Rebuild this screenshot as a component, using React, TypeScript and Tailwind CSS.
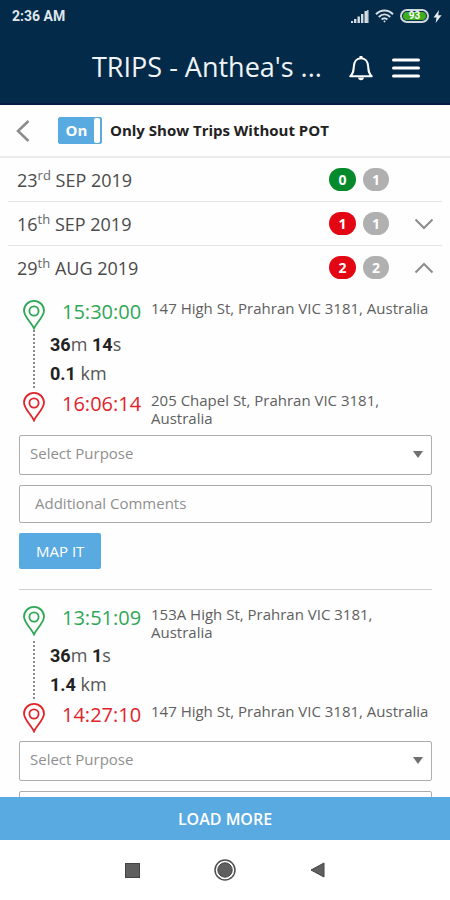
import React, { useState } from 'react';

interface Stop {
  time: string;
  address: string;
}

interface Trip {
  id: number;
  start: Stop;
  end: Stop;
  minutes: number;
  seconds: number;
  km: string;
}

interface TripDay {
  id: string;
  day: number;
  suffix: string;
  label: string;
  missing: number;
  total: number;
  trips: Trip[];
}

const DAYS: TripDay[] = [
  { id: 'sep-23', day: 23, suffix: 'rd', label: 'SEP 2019', missing: 0, total: 1, trips: [] },
  { id: 'sep-16', day: 16, suffix: 'th', label: 'SEP 2019', missing: 1, total: 1, trips: [] },
  {
    id: 'aug-29',
    day: 29,
    suffix: 'th',
    label: 'AUG 2019',
    missing: 2,
    total: 2,
    trips: [
      {
        id: 1,
        start: { time: '15:30:00', address: '147 High St, Prahran VIC 3181, Australia' },
        end: { time: '16:06:14', address: '205 Chapel St, Prahran VIC 3181, Australia' },
        minutes: 36,
        seconds: 14,
        km: '0.1',
      },
      {
        id: 2,
        start: { time: '13:51:09', address: '153A High St, Prahran VIC 3181, Australia' },
        end: { time: '14:27:10', address: '147 High St, Prahran VIC 3181, Australia' },
        minutes: 36,
        seconds: 1,
        km: '1.4',
      },
    ],
  },
];

const StatusBar: React.FC = () => (
  <div className="flex h-8 items-center justify-between pl-3 pr-2 font-['Roboto',sans-serif] text-[14px] font-bold text-[#dfe6ec]">
    <span>2:36 AM</span>
    <div className="flex items-center gap-1.5">
      <svg width="18" height="13" viewBox="0 0 18 13" fill="#d5dde4" aria-hidden="true">
        <rect x="0" y="11" width="2" height="2" />
        <rect x="3" y="9" width="2.4" height="4" />
        <rect x="6.5" y="6.5" width="2.4" height="6.5" />
        <rect x="10" y="4" width="2.4" height="9" />
        <rect x="13.5" y="1" width="2.6" height="12" />
        <rect x="16.1" y="0" width="1.4" height="13" />
      </svg>
      <svg width="19" height="14" viewBox="0 0 19 14" fill="none" stroke="#d5dde4" strokeWidth="2" aria-hidden="true">
        <path d="M1 5.2C6 .2 13 .2 18 5.2" />
        <path d="M3.8 8C7.2 4.8 11.8 4.8 15.2 8" />
        <path d="M6.6 10.6C8.4 9 10.6 9 12.4 10.6" />
        <path d="M9.5 11.2l1.2 1.2-1.2 1.2-1.2-1.2z" fill="#d5dde4" stroke="none" />
      </svg>
      <div className="flex items-center gap-1">
        <span className="flex h-[14px] w-[29px] rounded-full border-2 border-[#cfd8dc] p-px">
          <span className="flex flex-1 items-center justify-center rounded-full bg-[#3fae1c] text-[10px] leading-none text-white">93</span>
        </span>
        <svg width="9" height="13" viewBox="0 0 9 13" fill="#e6ecf0" aria-hidden="true">
          <path d="M6 0L.5 7.4h3L2.6 13 8.6 5.2H5.2z" />
        </svg>
      </div>
    </div>
  </div>
);

const Pin: React.FC<{ className: string }> = ({ className }) => (
  <svg width="22" height="30" viewBox="0 0 22 30" fill="none" stroke="currentColor" strokeWidth="1.8" className={className} aria-hidden="true">
    <path d="M11 28.500C8.600 22.600 1 17 1 10.600a10 9.700 0 0 1 20 0C21 17 13.400 22.600 11 28.500z" />
    <circle cx="11" cy="11" r="4.6" />
  </svg>
);

const StopRow: React.FC<{ stop: Stop; color: string }> = ({ stop, color }) => (
  <div className="flex min-h-[31px] items-start">
    <Pin className={`ml-1 mt-px shrink-0 ${color}`} />
    <span className={`ml-[17px] w-[89px] shrink-0 text-xl leading-[25px] ${color}`}>{stop.time}</span>
    <span className="flex-1 text-[15px] leading-[18px] text-[#606060]">{stop.address}</span>
  </div>
);

const TripCard: React.FC<{ trip: Trip }> = ({ trip }) => (
  <article>
    <StopRow stop={trip.start} color="text-[#2fa756]" />
    <div className="mb-[3px] flex">
      <span className="ml-[14px] border-l-2 border-dotted border-[#8a8a8a]" />
      <div className="ml-[15px] text-lg leading-[29px] text-[#555]">
        <p>
          <b className="font-['Roboto',sans-serif] text-[#222]">{trip.minutes}</b>m{' '}
          <b className="font-['Roboto',sans-serif] text-[#222]">{trip.seconds}</b>s
        </p>
        <p>
          <b className="font-['Roboto',sans-serif] text-[#222]">{trip.km}</b> km
        </p>
      </div>
    </div>
    <StopRow stop={trip.end} color="text-[#e0242b]" />
    <div className="relative mt-2">
      <select
        aria-label="Purpose"
        defaultValue=""
        className="block h-10 w-full appearance-none rounded-xs border border-[#adadad] bg-white px-2.5 pb-1 text-[15px] text-[#8f8f8f]"
      >
        <option value="">Select Purpose</option>
        <option value="business">Business</option>
        <option value="private">Private</option>
      </select>
      <svg width="10" height="7" viewBox="0 0 10 7" fill="#707070" className="pointer-events-none absolute right-[9px] top-4" aria-hidden="true">
        <path d="M0 0h10L5 7z" />
      </svg>
    </div>
    <input
      type="text"
      aria-label="Additional Comments"
      placeholder="Additional Comments"
      className="mt-2.5 block h-[38px] w-full rounded-xs border border-[#adadad] px-[15px] pb-0.5 text-[15px] placeholder:text-[#8f8f8f]"
    />
    <button type="button" className="mt-2.5 block h-9 rounded-xs bg-[#5aaae2] px-[17px] text-[15px] text-white">
      MAP IT
    </button>
  </article>
);

const DayRow: React.FC<{ day: TripDay; open: boolean; onToggle: () => void }> = ({ day, open, onToggle }) => (
  <button type="button" onClick={onToggle} className="flex h-[43px] w-full items-center pl-[9px] pr-2 text-left text-lg text-[#4a4a4a]">
    <span className="flex-1">
      {day.day}
      <sup className="text-[13px] text-[#666]">{day.suffix}</sup> {day.label}
    </span>
    <span
      className={`flex h-[23px] w-[27px] items-center justify-center rounded-full text-[14px] font-bold text-white ${
        day.missing === 0 ? 'bg-[#078a2b]' : 'bg-[#e30613]'
      }`}
    >
      {day.missing}
    </span>
    <span className="ml-[7px] flex h-[23px] w-[26px] items-center justify-center rounded-full bg-[#b0b0b0] text-[14px] font-bold text-white">
      {day.total}
    </span>
    <span className="ml-[25px] w-[20px]">
      {day.missing > 0 && (
        <svg width="20" height="12" viewBox="0 0 20 12" fill="none" stroke="#8c8c8c" strokeWidth="2" aria-hidden="true">
          <path d={open ? 'M1.5 10.5L10 2l8.5 8.5' : 'M1.5 1.5L10 10l8.5-8.5'} />
        </svg>
      )}
    </span>
  </button>
);

export default function App() {
  const [openDay, setOpenDay] = useState('aug-29');
  const [withoutPot, setWithoutPot] = useState(true);

  return (
    <div className="flex h-screen flex-col bg-[#fefefe] font-['Open_Sans','Noto_Sans',sans-serif]">
      <header className="shrink-0 border-b-2 border-[#001a44] bg-[#032b49] text-white">
        <StatusBar />
        <div className="flex h-[71px] items-center pl-[92px] pr-[30px]">
          <h1 className="min-w-0 flex-1 whitespace-nowrap text-[27px] text-[#f1f4f6]">TRIPS - Anthea's ...</h1>
          <button type="button" aria-label="Notifications" className="mr-[18px]">
            <svg width="26" height="26" viewBox="0 0 26 26" fill="none" stroke="white" strokeWidth="2" strokeLinejoin="round" aria-hidden="true">
              <path d="M2.2 21.2C5.4 18.6 5.6 16 5.8 11.6 6 6.8 8.6 3.2 13 3.2s7 3.600 7.200 8.400c.2 4.400.4 7 3.600 9.600z" />
              <path d="M10 22.500h6c0 1.600-1.300 2.700-3 2.700s-3-1.100-3-2.700z" fill="white" stroke="none" />
              <path d="M13 1v2" strokeWidth="3" />
            </svg>
          </button>
          <button type="button" aria-label="Menu">
            <svg width="28" height="20" viewBox="0 0 28 20" stroke="white" strokeWidth="3" strokeLinecap="round" aria-hidden="true">
              <path d="M1.500 2h25M1.500 10h25M1.500 18h25" />
            </svg>
          </button>
        </div>
      </header>

      <div className="flex h-[53px] shrink-0 items-center border-b-2 border-[#ececec] pl-4">
        <button type="button" aria-label="Back">
          <svg width="14" height="22" viewBox="0 0 14 22" fill="none" stroke="#8c8c8c" strokeWidth="2.500" aria-hidden="true">
            <path d="M12.500 1L2 11l10.500 10" />
          </svg>
        </button>
        <button
          type="button"
          role="switch"
          aria-checked={withoutPot}
          aria-labelledby="pot-label"
          onClick={() => setWithoutPot(!withoutPot)}
          className="ml-7 flex h-[27px] w-11 items-center rounded-xs border border-[#5aaae2] bg-[#5aaae2] text-[15px] font-bold text-white"
        >
          <span className="flex-1 text-center">{withoutPot ? 'On' : 'Off'}</span>
          <span className="mr-px h-[25px] w-[6px] rounded-xs bg-white" />
        </button>
        <span id="pot-label" className="ml-2 text-[15px] font-bold text-[#222]">
          Only Show Trips Without POT
        </span>
      </div>

      <main className="min-h-0 flex-1 overflow-y-auto px-2 [scrollbar-width:none]">
        {DAYS.map((day, i) => (
          <section key={day.id} className={i > 0 ? 'border-t border-[#e4e4e4]' : ''}>
            <DayRow day={day} open={openDay === day.id} onToggle={() => setOpenDay(openDay === day.id ? '' : day.id)} />
            {openDay === day.id && (
              <div className="pl-[11px] pr-2.5 pt-2.5">
                {day.trips.map((trip, n) => (
                  <div key={trip.id} className={n > 0 ? 'mt-5 border-t border-[#cfcfcf] pt-[15px]' : ''}>
                    <TripCard trip={trip} />
                  </div>
                ))}
              </div>
            )}
          </section>
        ))}
      </main>

      <button type="button" className="h-[43px] shrink-0 bg-[#5aaae2] text-base font-semibold text-white">
        LOAD MORE
      </button>

      <nav className="flex h-[60px] shrink-0 items-center justify-center gap-[74px] bg-white" aria-label="System">
        <button type="button" aria-label="Recent apps">
          <svg width="15" height="15" viewBox="0 0 15 15" aria-hidden="true">
            <rect x="0.500" y="0.500" width="14" height="14" fill="#5f5f5f" stroke="#444" />
          </svg>
        </button>
        <button type="button" aria-label="Home">
          <svg width="22" height="22" viewBox="0 0 22 22" aria-hidden="true">
            <circle cx="11" cy="11" r="10" fill="none" stroke="#4f4f4f" strokeWidth="1.500" />
            <circle cx="11" cy="11" r="7.200" fill="#5f5f5f" stroke="#444" />
          </svg>
        </button>
        <button type="button" aria-label="Go back">
          <svg width="15" height="16" viewBox="0 0 15 16" aria-hidden="true">
            <path d="M14 1v14L1 8z" fill="#5f5f5f" stroke="#444" />
          </svg>
        </button>
      </nav>
    </div>
  );
}
